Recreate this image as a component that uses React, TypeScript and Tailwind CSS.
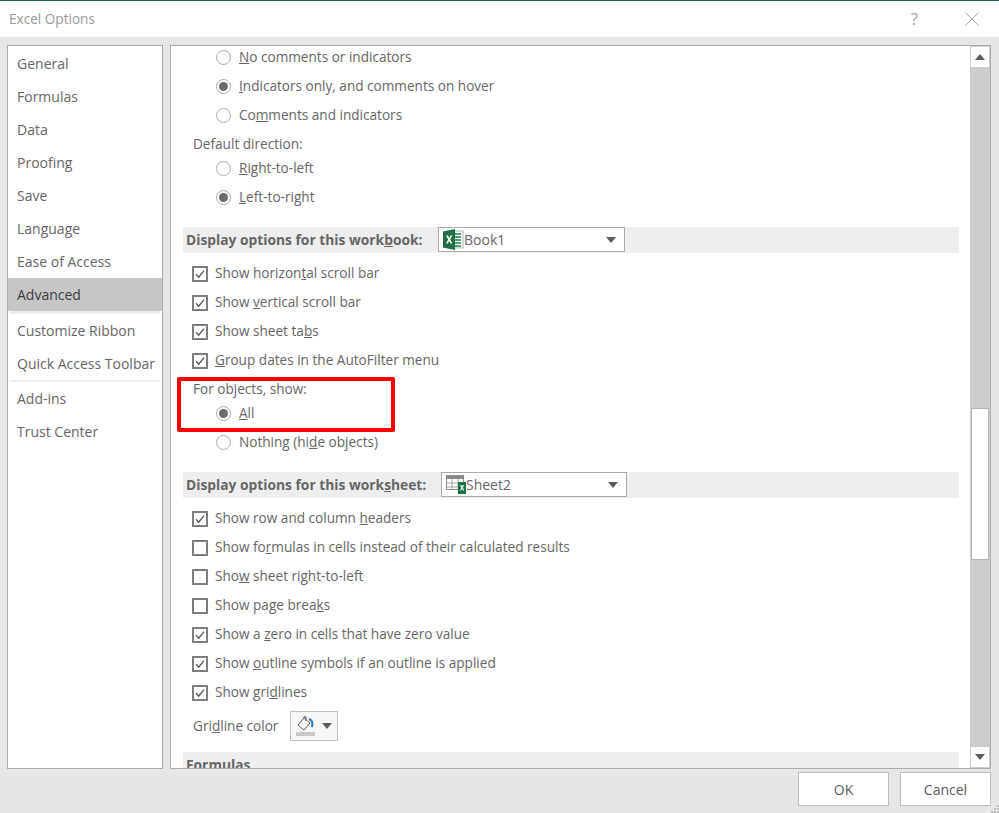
import type { ReactNode } from "react";

const navTop = ["General", "Formulas", "Data", "Proofing", "Save", "Language", "Ease of Access"];

function Radio({ on }: { on?: boolean }) {
  return (
    <span className="flex h-[15px] w-[15px] shrink-0 items-center justify-center rounded-full border border-[#ababab] bg-white">
      {on ? <span className="h-[9px] w-[9px] rounded-full bg-[#6b6b6b]" /> : null}
    </span>
  );
}

function RadioRow({ on, children }: { on?: boolean; children: ReactNode }) {
  return (
    <div className="flex h-[29px] items-center gap-[8px] pl-[33px]">
      <Radio on={on} />
      <span>{children}</span>
    </div>
  );
}

function CheckRow({ on, children }: { on?: boolean; children: ReactNode }) {
  return (
    <div className="flex h-[29px] items-center gap-[7px] pl-[9px]">
      <span className="flex h-[16px] w-[16px] shrink-0 items-center justify-center border-2 border-[#7d7d7d] bg-white">
        {on ? (
          <svg width="12" height="12" viewBox="0 0 12 12" fill="none" stroke="#555" strokeWidth="1.3">
            <path d="M2 6.3 4.7 9.2 10 2.6" />
          </svg>
        ) : null}
      </span>
      <span>{children}</span>
    </div>
  );
}

function BookIcon() {
  return (
    <svg width="21" height="21" viewBox="0 0 21 21" className="shrink-0">
      <rect x="8" y="2" width="12" height="17" fill="#fff" stroke="#9fb8a8" />
      <path d="M12 5h6M12 8h6M12 11h6M12 14h6M12 17h6" stroke="#21794a" strokeWidth="1.6" />
      <path d="M0 2.5 12 0v21L0 18.5z" fill="#1f7145" />
      <path d="M3 6.5h2l1.2 2.4L7.5 6.5h1.8L7.2 10.4l2.2 4H7.5L6.1 11.8 4.8 14.4H3l2.2-4z" fill="#fff" />
    </svg>
  );
}

function SheetIcon() {
  return (
    <svg width="20" height="19" viewBox="0 0 20 19" className="shrink-0">
      <rect x="0.5" y="0.5" width="17" height="14" fill="#fff" stroke="#8a8a8a" />
      <rect x="0.5" y="0.5" width="17" height="3.5" fill="#8a8a8a" />
      <path d="M6 4v11M12 4v11M1 8h16M1 12h16" stroke="#a5a5a5" />
      <rect x="12" y="7" width="8" height="12" fill="#1f7145" />
      <path d="M14 10h1.3l.8 1.6.8-1.6h1.3l-1.4 2.6 1.5 2.8h-1.3l-.9-1.8-.9 1.8h-1.3l1.5-2.8z" fill="#fff" />
    </svg>
  );
}

function Caret({ up }: { up?: boolean }) {
  return (
    <svg width="10" height="6" viewBox="0 0 10 6" className="shrink-0">
      <path d={up ? "M0 6 5 0l5 6z" : "M0 0h10L5 6z"} fill="#5c5c5c" />
    </svg>
  );
}

function SectionHead({ label, offset, children }: { label: ReactNode; offset: string; children: ReactNode }) {
  return (
    <div className="flex h-[26px] items-start bg-[#eeeeee] pl-[3px]">
      <b className={`flex h-[26px] items-center text-[13.8px] font-bold ${offset}`}>{label}</b>
      {children}
    </div>
  );
}

function Combo({ width, children }: { width: string; children: ReactNode }) {
  return (
    <div className={`flex h-[25px] items-center border border-[#ababab] bg-white pl-[4px] pr-[8px] text-[14px] ${width}`}>
      {children}
      <span className="ml-auto">
        <Caret />
      </span>
    </div>
  );
}

export default function App() {
  return (
    <div className="flex h-[813px] w-[999px] flex-col overflow-hidden bg-[#e6e6e6] font-['Open_Sans',sans-serif] text-[14px] text-[#666666]">
      <header className="flex h-[37px] shrink-0 items-center border-t border-[#21694a] bg-white pl-[9px] pr-[20px]">
        <span className="text-[13.6px] text-[#9a9a9a]">Excel Options</span>
        <span className="ml-auto mr-[47px] text-[17px] text-[#a6a6a6]">?</span>
        <svg width="14" height="14" viewBox="0 0 14 14" stroke="#a6a6a6" strokeWidth="1">
          <path d="M.5.5l13 13M13.5.5l-13 13" />
        </svg>
      </header>

      <div className="flex h-[732px] shrink-0 gap-[7px] pl-[7px] pr-[8px] pt-[8px]">
        <nav className="h-[724px] w-[156px] shrink-0 border border-[#ababab] bg-white pt-[1px]">
          {navTop.map((item) => (
            <div key={item} className="flex h-[33px] items-center pl-[9px]">
              {item}
            </div>
          ))}
          <div className="flex h-[33px] items-center bg-[#c6c6c6] pl-[9px] text-[#3c3c3c]">Advanced</div>
          <div className="mx-[2px] h-[3px] bg-[#eeeeee]" />
          <div className="flex h-[33px] items-center pl-[9px]">Customize Ribbon</div>
          <div className="flex h-[33px] items-center pl-[9px]">Quick Access Toolbar</div>
          <div className="mx-[2px] h-[2px] bg-[#eeeeee]" />
          <div className="flex h-[33px] items-center pl-[9px]">Add-ins</div>
          <div className="flex h-[33px] items-center pl-[9px]">Trust Center</div>
        </nav>

        <main className="relative flex h-[724px] min-w-0 flex-1 border border-[#ababab] bg-white text-[13.6px]">
          <div className="h-full min-w-0 flex-1 overflow-hidden pl-[12px] pr-[11px]">
            <div className="-mt-[3px]">
              <RadioRow><u>N</u>o comments or indicators</RadioRow>
              <RadioRow on><u>I</u>ndicators only, and comments on hover</RadioRow>
              <RadioRow>Co<u>m</u>ments and indicators</RadioRow>
              <div className="flex h-[29px] items-center pl-[10px]">Default direction:</div>
              <div className="-mt-[5px]">
                <RadioRow><u>R</u>ight-to-left</RadioRow>
                <RadioRow on><u>L</u>eft-to-right</RadioRow>
              </div>
              <div className="mt-[15px]">
                <SectionHead offset="w-[252px]" label={<>Display options for this work<u>b</u>ook:</>}>
                  <Combo width="w-[187px]">
                    <BookIcon />
                    <span className="text-[#666666]">Book1</span>
                  </Combo>
                </SectionHead>
              </div>
              <div className="mt-[6px]">
                <CheckRow on>Show horizon<u>t</u>al scroll bar</CheckRow>
                <CheckRow on>Show <u>v</u>ertical scroll bar</CheckRow>
                <CheckRow on>Show sheet ta<u>b</u>s</CheckRow>
                <CheckRow on><u>G</u>roup dates in the AutoFilter menu</CheckRow>
              </div>
              <div className="flex h-[29px] items-center pl-[10px]">For objects, show:</div>
              <div className="-mt-[5px]">
                <RadioRow on><u>A</u>ll</RadioRow>
                <RadioRow>Nothing (hi<u>d</u>e objects)</RadioRow>
              </div>
              <div className="mt-[15px]">
                <SectionHead offset="w-[255px]" label={<>Display options for this work<u>s</u>heet:</>}>
                  <Combo width="w-[186px]">
                    <SheetIcon />
                    <span className="text-[#666666]">Sheet2</span>
                  </Combo>
                </SectionHead>
              </div>
              <div className="mt-[6px]">
                <CheckRow on>Show row and column <u>h</u>eaders</CheckRow>
                <CheckRow>Show fo<u>r</u>mulas in cells instead of their calculated results</CheckRow>
                <CheckRow>Sho<u>w</u> sheet right-to-left</CheckRow>
                <CheckRow>Show page brea<u>k</u>s</CheckRow>
                <CheckRow on>Show a <u>z</u>ero in cells that have zero value</CheckRow>
                <CheckRow on>Show <u>o</u>utline symbols if an outline is applied</CheckRow>
                <CheckRow on>Show gri<u>d</u>lines</CheckRow>
              </div>
              <div className="mt-[4px] flex h-[30px] items-center pl-[10px]">
                <span className="w-[97px]">Gri<u>d</u>line color</span>
                <span className="flex h-[30px] w-[48px] items-center justify-center gap-[6px] border border-[#c0c0c0] bg-[#f7f7f7]">
                  <svg width="20" height="20" viewBox="0 0 20 20" fill="none">
                    <path d="M8 2 2 9l6 5 6-7z" stroke="#5c5c5c" fill="#fff" />
                    <path d="M8 2V0.8h2V5" stroke="#5c5c5c" />
                    <path d="M13 3c3 1 4 4 3 8" stroke="#2e75b6" strokeWidth="2" />
                    <rect x="0" y="16" width="19" height="4" fill="#c8c8c8" />
                  </svg>
                  <Caret />
                </span>
              </div>
              <div className="mt-[11px] h-[30px] bg-[#eeeeee] pl-[3px] pt-[3px] text-[13.8px] font-bold">Formulas</div>
            </div>
          </div>

          <div className="flex w-[20px] shrink-0 flex-col bg-[#cdcdcd] p-[1px]">
            <div className="flex h-[20px] shrink-0 items-center justify-center bg-white">
              <Caret up />
            </div>
            <div className="mt-[341px] h-[152px] shrink-0 border border-[#b5b5b5] bg-white" />
            <div className="mt-auto flex h-[20px] shrink-0 items-center justify-center bg-white">
              <Caret />
            </div>
          </div>

          <div className="pointer-events-none absolute left-[6px] top-[331px] h-[55px] w-[218px] rounded-[2px] border-4 border-[#ff0000]" />
        </main>
      </div>

      <footer className="relative flex flex-1 items-start justify-end gap-[11px] pr-[8px] pt-[3px]">
        <button type="button" className="h-[34px] w-[91px] border border-[#bdbdbd] bg-white text-[#5a5a5a]">OK</button>
        <button type="button" className="h-[34px] w-[91px] border border-[#bdbdbd] bg-white text-[#5a5a5a]">Cancel</button>
        <svg width="8" height="8" viewBox="0 0 8 8" className="absolute bottom-0 right-0" fill="#bdbdbd">
          <path d="M6 0h2v2H6zM3 3h2v2H3zM6 3h2v2H6zM0 6h2v2H0zM3 6h2v2H3zM6 6h2v2H6z" />
        </svg>
      </footer>
    </div>
  );
}
